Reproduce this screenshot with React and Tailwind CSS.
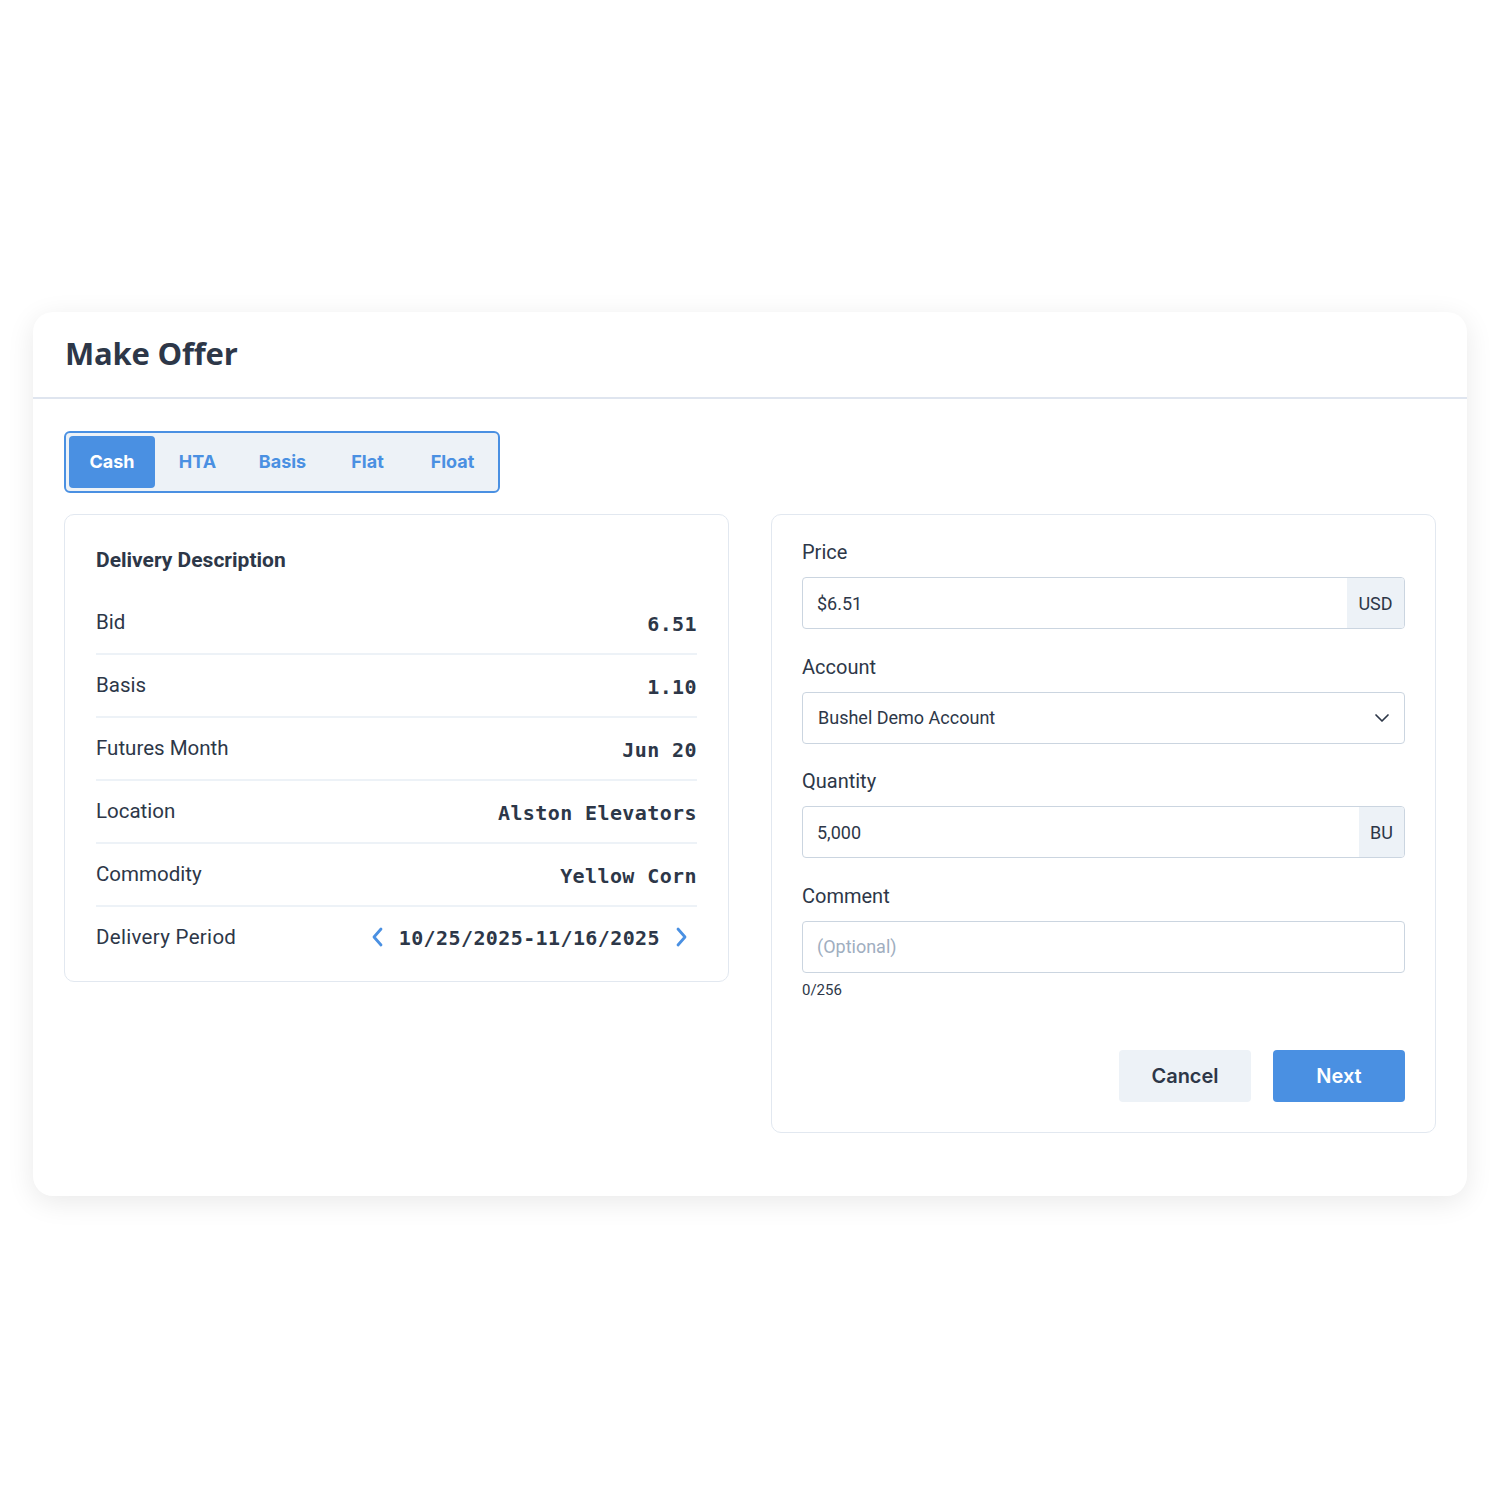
import { ChevronDown } from 'lucide-react';

const tabs = ['Cash', 'HTA', 'Basis', 'Flat', 'Float'];

const rows = [
  { label: 'Bid', value: '6.51' },
  { label: 'Basis', value: '1.10' },
  { label: 'Futures Month', value: 'Jun 20' },
  { label: 'Location', value: 'Alston Elevators' },
  { label: 'Commodity', value: 'Yellow Corn' }
];

const mono = { fontFamily: '"DejaVu Sans Mono", "Liberation Mono", monospace' };

function Chevron({ dir }) {
  return (
    <svg width="12" height="20" viewBox="0 0 12 20" fill="none" className="text-[#4a90e2]">
      <polyline
        points={dir === 'left' ? '10,2 3,10 10,18' : '2,2 9,10 2,18'}
        stroke="currentColor"
        strokeWidth="2.8"
        strokeLinecap="round"
        strokeLinejoin="round"
      />
    </svg>
  );
}

function Field({ label, children }) {
  return (
    <div className="flex flex-col">
      <label className="text-[20px] leading-6 text-[#2d3748] mb-[13px]">{label}</label>
      {children}
    </div>
  );
}

export default function App() {
  return (
    <div className="min-h-screen bg-white font-['Roboto',sans-serif] text-[#2d3748] pt-[312px] px-[33px]">
      <div className="bg-white rounded-[20px] shadow-[0_6px_28px_rgba(0,0,0,0.09)] pb-[63px]">
        {/* Header */}
        <div className="h-[87px] border-b-2 border-[#dfe5ef] px-8 flex items-center pb-[3px]">
          <h1 className="text-[31px] font-bold text-[#2d3748] font-['Open_Sans',sans-serif] tracking-[-0.2px]">
            Make Offer
          </h1>
        </div>

        <div className="px-[31px] pt-8">
          {/* Tabs */}
          <div className="inline-flex items-center border-2 border-[#4a90e2] rounded-md bg-[#edf2f7] p-[3px] h-[62px] font-['Inter',sans-serif]">
            {tabs.map((t, i) => (
              <div
                key={t}
                className={
                  i === 0
                    ? 'h-[52px] w-[86px] flex items-center justify-center rounded bg-[#4a90e2] text-white text-[18px] font-bold pb-[2px]'
                    : 'h-[52px] w-[85px] flex items-center justify-center text-[#4a90e2] text-[18px] font-bold pb-[2px]'
                }
              >
                {t}
              </div>
            ))}
          </div>

          <div className="grid grid-cols-2 gap-[42px] mt-[21px] items-start">
            {/* Delivery description */}
            <div className="border border-[#e2e8f0] rounded-[10px] px-[31px] pt-[33px] pb-[14px]">
              <h2 className="text-[21px] font-bold leading-6 mb-[20px]">Delivery Description</h2>
              {rows.map((r) => (
                <div
                  key={r.label}
                  className="flex items-center justify-between h-[63px] border-b-2 border-[#edf2f7]"
                >
                  <span className="text-[20.5px]">{r.label}</span>
                  <span className="text-[20px] font-bold tracking-[0.4px] pt-[2px]" style={mono}>
                    {r.value}
                  </span>
                </div>
              ))}
              <div className="flex items-center justify-between h-[60px]">
                <span className="text-[20.5px] tracking-[0.3px]">Delivery Period</span>
                <div className="flex items-center gap-[16px] pr-[9px]">
                  <Chevron dir="left" />
                  <span className="text-[20px] font-bold tracking-[0.4px] pt-[2px]" style={mono}>
                    10/25/2025-11/16/2025
                  </span>
                  <Chevron dir="right" />
                </div>
              </div>
            </div>

            {/* Offer form */}
            <div className="border border-[#e2e8f0] rounded-[10px] px-[30px] pt-[25px] pb-[30px] flex flex-col gap-[25.5px]">
              <Field label="Price">
                <div className="flex h-[52px] border border-[#cbd5e0] rounded overflow-hidden">
                  <div className="flex-1 flex items-center px-[14px] text-[18px]">$6.51</div>
                  <div className="w-[57px] bg-[#edf2f7] flex items-center justify-center text-[18px]">USD</div>
                </div>
              </Field>
              <Field label="Account">
                <div className="flex h-[52px] border border-[#cbd5e0] rounded items-center justify-between px-[15px] text-[18px]">
                  <span>Bushel Demo Account</span>
                  <ChevronDown size={24} strokeWidth={1.7} className="text-[#2d3748] -mr-[5px]" />
                </div>
              </Field>
              <Field label="Quantity">
                <div className="flex h-[52px] border border-[#cbd5e0] rounded overflow-hidden">
                  <div className="flex-1 flex items-center px-[14px] text-[18px]">5,000</div>
                  <div className="w-[45px] bg-[#edf2f7] flex items-center justify-center text-[18px]">BU</div>
                </div>
              </Field>
              <div className="flex flex-col">
                <label className="text-[20px] leading-6 mb-[13px]">Comment</label>
                <div className="flex h-[52px] border border-[#cbd5e0] rounded items-center px-[14px] text-[18px] text-[#a0aec0]">
                  (Optional)
                </div>
                <span className="text-[15px] mt-[7px] leading-5">0/256</span>
                <div className="flex justify-end gap-[22px] mt-[50px] font-['Inter',sans-serif]">
                  <button className="w-[132px] h-[52px] rounded bg-[#edf2f7] text-[20px] font-semibold text-[#2d3748]">
                    Cancel
                  </button>
                  <button className="w-[132px] h-[52px] rounded bg-[#4a90e2] text-[20px] font-semibold text-white">
                    Next
                  </button>
                </div>
              </div>
            </div>
          </div>
        </div>
      </div>
    </div>
  );
}
